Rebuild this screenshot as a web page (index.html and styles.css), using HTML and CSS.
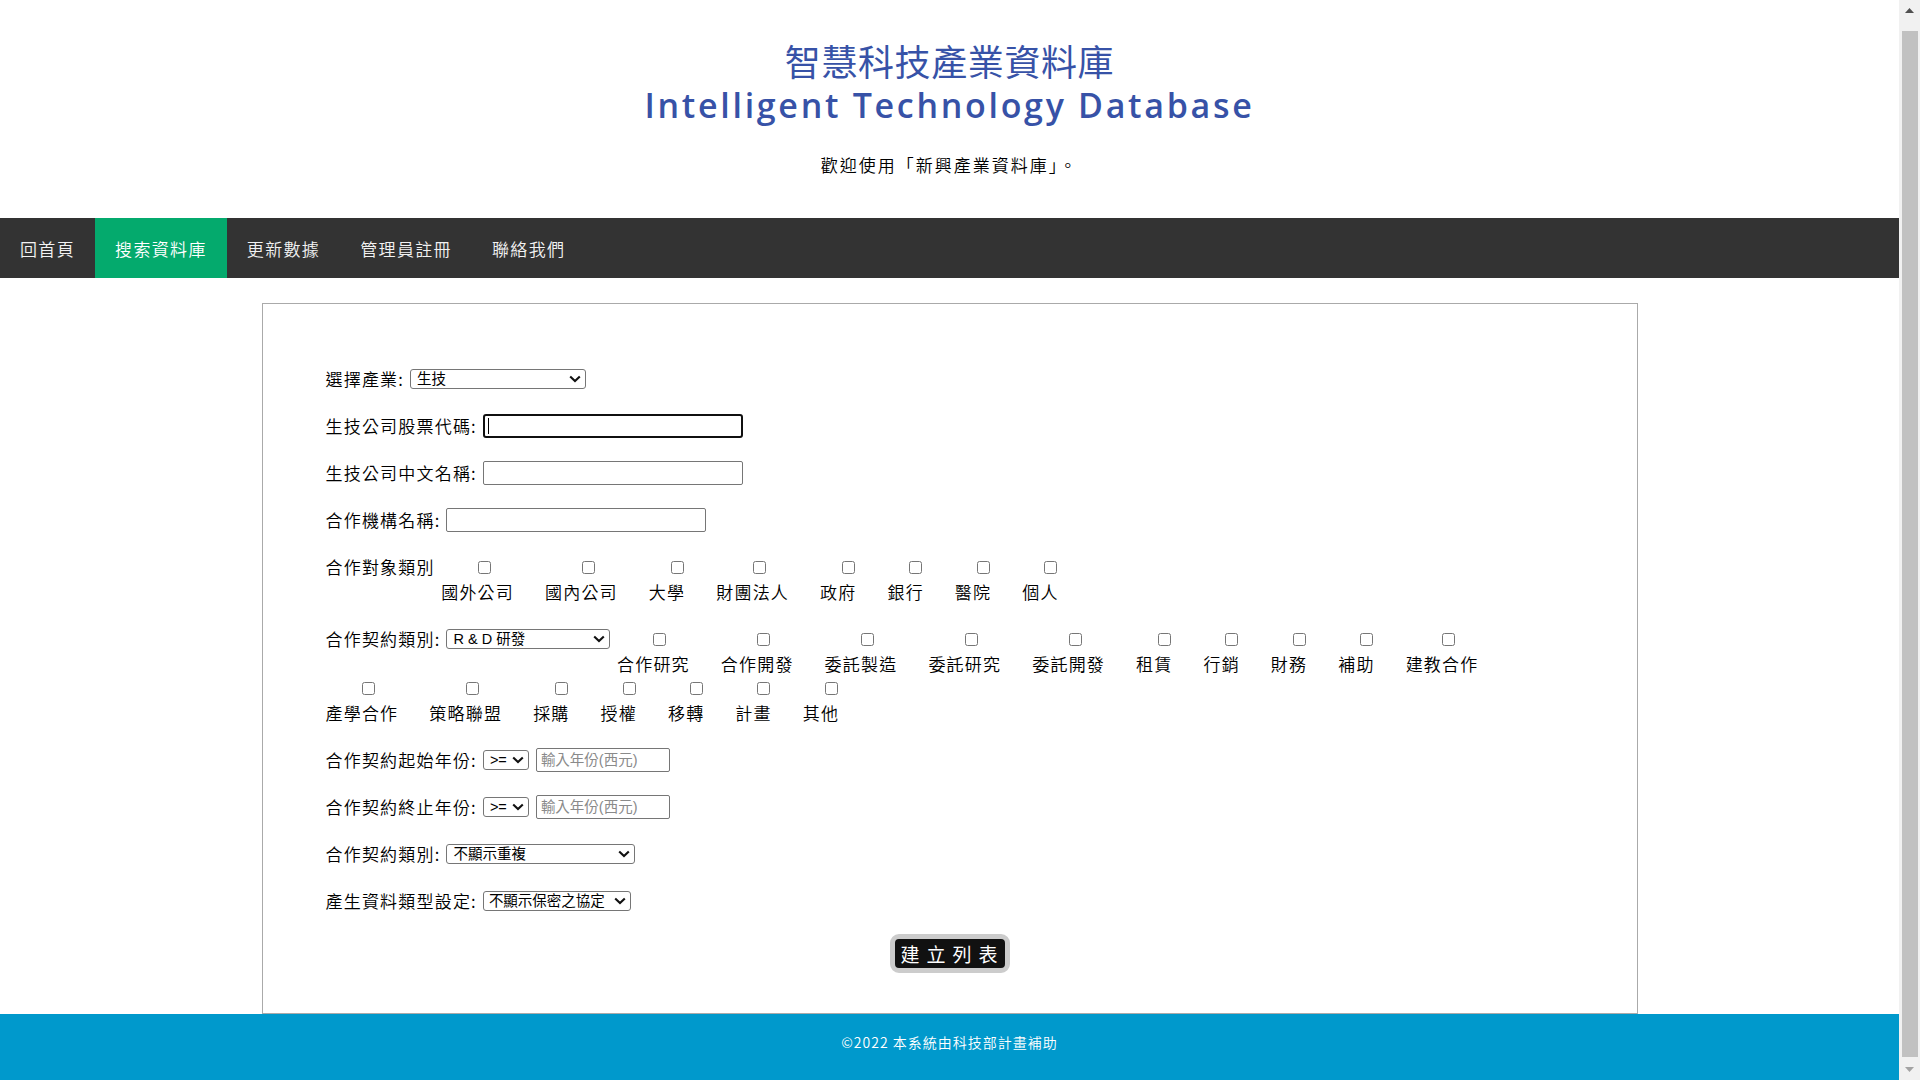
FILE: index.html
```html
<!DOCTYPE html>
<html lang="zh-Hant">
<head>
<meta charset="utf-8">
<title>智慧科技產業資料庫</title>
<link rel="stylesheet" href="styles.css">
</head>
<body>
<div class="viewport">
  <div class="main">
    <header class="header">
      <h1 class="title">
        <span class="title-zh">智慧科技產業資料庫</span>
        <span class="title-en">Intelligent Technology Database</span>
      </h1>
      <p class="welcome">歡迎使用「新興產業資料庫」。</p>
    </header>

    <nav class="topnav">
      <a href="#">回首頁</a>
      <a href="#" class="active">搜索資料庫</a>
      <a href="#">更新數據</a>
      <a href="#">管理員註冊</a>
      <a href="#">聯絡我們</a>
    </nav>

    <section class="panel">
      <form class="search-form">
        <div class="row">
          <label class="lbl">選擇產業:</label>
          <span class="sel-wrap">
            <select class="sel sel-industry"><option>生技</option></select>
            <svg class="chev" width="12" height="8" viewBox="0 0 12 8"><path d="M1.2 1.4 L6 6 L10.8 1.4" fill="none" stroke="#111" stroke-width="2.1"/></svg>
          </span>
        </div>
        <div class="row">
          <label class="lbl">生技公司股票代碼:</label>
          <span class="txt-wrap">
            <input type="text" class="txt is-focused">
            <span class="caret"></span>
          </span>
        </div>
        <div class="row">
          <label class="lbl">生技公司中文名稱:</label>
          <input type="text" class="txt">
        </div>
        <div class="row">
          <label class="lbl">合作機構名稱:</label>
          <input type="text" class="txt">
        </div>

        <div class="opts-block">
          <div class="opt-line">
            <span class="lbl">合作對象類別</span>
            <label class="opt w4"><span class="cb-line"><input type="checkbox" class="cb"></span><span class="opt-text">國外公司</span></label>
            <label class="opt w4"><span class="cb-line"><input type="checkbox" class="cb"></span><span class="opt-text">國內公司</span></label>
            <label class="opt w2"><span class="cb-line"><input type="checkbox" class="cb"></span><span class="opt-text">大學</span></label>
            <label class="opt w4"><span class="cb-line"><input type="checkbox" class="cb"></span><span class="opt-text">財團法人</span></label>
            <label class="opt w2"><span class="cb-line"><input type="checkbox" class="cb"></span><span class="opt-text">政府</span></label>
            <label class="opt w2"><span class="cb-line"><input type="checkbox" class="cb"></span><span class="opt-text">銀行</span></label>
            <label class="opt w2"><span class="cb-line"><input type="checkbox" class="cb"></span><span class="opt-text">醫院</span></label>
            <label class="opt w2"><span class="cb-line"><input type="checkbox" class="cb"></span><span class="opt-text">個人</span></label>
          </div>
        </div>

        <div class="opts-block">
          <div class="opt-line">
            <span class="lbl">合作契約類別:</span>
            <span class="sel-wrap in-line">
              <select class="sel sel-rd"><option>R &amp; D 研發</option></select>
              <svg class="chev" width="12" height="8" viewBox="0 0 12 8"><path d="M1.2 1.4 L6 6 L10.8 1.4" fill="none" stroke="#111" stroke-width="2.1"/></svg>
            </span>
            <label class="opt w4"><span class="cb-line"><input type="checkbox" class="cb"></span><span class="opt-text">合作研究</span></label>
            <label class="opt w4"><span class="cb-line"><input type="checkbox" class="cb"></span><span class="opt-text">合作開發</span></label>
            <label class="opt w4"><span class="cb-line"><input type="checkbox" class="cb"></span><span class="opt-text">委託製造</span></label>
            <label class="opt w4"><span class="cb-line"><input type="checkbox" class="cb"></span><span class="opt-text">委託研究</span></label>
            <label class="opt w4"><span class="cb-line"><input type="checkbox" class="cb"></span><span class="opt-text">委託開發</span></label>
            <label class="opt w2"><span class="cb-line"><input type="checkbox" class="cb"></span><span class="opt-text">租賃</span></label>
            <label class="opt w2"><span class="cb-line"><input type="checkbox" class="cb"></span><span class="opt-text">行銷</span></label>
            <label class="opt w2"><span class="cb-line"><input type="checkbox" class="cb"></span><span class="opt-text">財務</span></label>
            <label class="opt w2"><span class="cb-line"><input type="checkbox" class="cb"></span><span class="opt-text">補助</span></label>
            <label class="opt w4"><span class="cb-line"><input type="checkbox" class="cb"></span><span class="opt-text">建教合作</span></label>
          </div>
          <div class="opt-line">
            <label class="opt w4"><span class="cb-line"><input type="checkbox" class="cb"></span><span class="opt-text">產學合作</span></label>
            <label class="opt w4"><span class="cb-line"><input type="checkbox" class="cb"></span><span class="opt-text">策略聯盟</span></label>
            <label class="opt w2"><span class="cb-line"><input type="checkbox" class="cb"></span><span class="opt-text">採購</span></label>
            <label class="opt w2"><span class="cb-line"><input type="checkbox" class="cb"></span><span class="opt-text">授權</span></label>
            <label class="opt w2"><span class="cb-line"><input type="checkbox" class="cb"></span><span class="opt-text">移轉</span></label>
            <label class="opt w2"><span class="cb-line"><input type="checkbox" class="cb"></span><span class="opt-text">計畫</span></label>
            <label class="opt w2"><span class="cb-line"><input type="checkbox" class="cb"></span><span class="opt-text">其他</span></label>
          </div>
        </div>

        <div class="row">
          <label class="lbl">合作契約起始年份:</label>
          <span class="sel-wrap">
            <select class="sel sel-op"><option>&gt;=</option></select>
            <svg class="chev" width="12" height="8" viewBox="0 0 12 8"><path d="M1.2 1.4 L6 6 L10.8 1.4" fill="none" stroke="#111" stroke-width="2.1"/></svg>
          </span>
          <input type="text" class="year" placeholder="輸入年份(西元)">
        </div>
        <div class="row">
          <label class="lbl">合作契約終止年份:</label>
          <span class="sel-wrap">
            <select class="sel sel-op"><option>&gt;=</option></select>
            <svg class="chev" width="12" height="8" viewBox="0 0 12 8"><path d="M1.2 1.4 L6 6 L10.8 1.4" fill="none" stroke="#111" stroke-width="2.1"/></svg>
          </span>
          <input type="text" class="year" placeholder="輸入年份(西元)">
        </div>
        <div class="row">
          <label class="lbl">合作契約類別:</label>
          <span class="sel-wrap">
            <select class="sel sel-dup"><option>不顯示重複</option></select>
            <svg class="chev" width="12" height="8" viewBox="0 0 12 8"><path d="M1.2 1.4 L6 6 L10.8 1.4" fill="none" stroke="#111" stroke-width="2.1"/></svg>
          </span>
        </div>
        <div class="row">
          <label class="lbl">產生資料類型設定:</label>
          <span class="sel-wrap">
            <select class="sel sel-conf"><option>不顯示保密之協定</option></select>
            <svg class="chev" width="12" height="8" viewBox="0 0 12 8"><path d="M1.2 1.4 L6 6 L10.8 1.4" fill="none" stroke="#111" stroke-width="2.1"/></svg>
          </span>
        </div>

        <div class="submit-wrap">
          <button type="button" class="btn-build">建立列表</button>
        </div>
      </form>
    </section>

    <footer class="footer">©2022 本系統由科技部計畫補助</footer>
  </div>

  <div class="scrollbar">
    <span class="sb-btn">
      <svg width="9" height="5" viewBox="0 0 9 5"><polygon points="0,5 4.5,0 9,5" fill="#505050"/></svg>
    </span>
    <span class="sb-thumb"></span>
    <span class="sb-btn sb-down">
      <svg width="9" height="5" viewBox="0 0 9 5"><polygon points="0,0 9,0 4.5,5" fill="#a3a3a3"/></svg>
    </span>
  </div>
</div>
</body>
</html>
```

FILE: styles.css
```css
* {
  box-sizing: border-box;
}

html,
body {
  margin: 0;
  padding: 0;
  height: 100%;
  overflow: hidden;
  background: #ffffff;
}

body {
  font-family: "Noto Sans CJK TC", "Noto Sans", sans-serif;
  font-weight: 350;
  color: #000000;
}

.viewport {
  display: flex;
  height: 1080px;
  overflow: hidden;
}

.main {
  flex: 1;
  min-width: 0;
  overflow: hidden;
}

/* ---------- header ---------- */
.header {
  height: 218px;
  padding-top: 40px;
  text-align: center;
}

.title {
  margin: 0;
  font-weight: normal;
}

.title-zh {
  display: block;
  font-size: 36px;
  line-height: 40px;
  letter-spacing: 0.6px;
  color: #3752a7;
}

.title-en {
  display: block;
  margin-top: 5px;
  font-family: "Open Sans", "Noto Sans", sans-serif;
  font-weight: 600;
  font-size: 34px;
  line-height: 40px;
  letter-spacing: 2.7px;
  color: #3752a7;
}

.welcome {
  margin: 28px 0 0;
  font-size: 17px;
  line-height: 24px;
  letter-spacing: 2px;
}

/* ---------- nav ---------- */
.topnav {
  display: flex;
  height: 60px;
  background: #333333;
}

.topnav a {
  display: flex;
  align-items: center;
  padding: 0 20px;
  color: #f2f2f2;
  text-decoration: none;
  font-size: 17px;
  letter-spacing: 1.35px;
}

.topnav a.active {
  background: #04aa6d;
  color: #ffffff;
}

/* ---------- panel ---------- */
.panel {
  width: 1376px;
  margin: 25px auto 0;
  border: 1px solid #aaaaaa;
  padding: 63px 63px 40.5px;
}

.search-form {
  display: flex;
  flex-direction: column;
  gap: 23px;
}

.row {
  display: flex;
  align-items: center;
  gap: 6px;
  height: 24px;
}

.lbl {
  font-size: 17px;
  line-height: 24px;
  letter-spacing: 1.2px;
  white-space: nowrap;
}

/* select with drawn chevron */
.sel-wrap {
  position: relative;
  display: inline-flex;
  flex: none;
}

.sel-wrap.in-line {
  margin: 2px 0 0 6px;
}

.chev {
  position: absolute;
  right: 5px;
  top: 6px;
  pointer-events: none;
}

.sel {
  -webkit-appearance: none;
  appearance: none;
  height: 20px;
  border: 1px solid #767676;
  border-radius: 3px;
  background-color: #ffffff;
  color: #000000;
  font-family: "Liberation Sans", "Noto Sans CJK TC", sans-serif;
  font-weight: 400;
  font-size: 14.5px;
  line-height: 18px;
  padding: 0 0 0 6px;
  margin: 0;
}

.sel-industry { width: 176px; }
.sel-rd { width: 164px; }
.sel-op { width: 46px; }
.sel-dup { width: 189px; }
.sel-conf { width: 148px; padding-left: 5px; }

.txt,
.year {
  height: 24px;
  border: 1px solid #767676;
  border-radius: 2px;
  margin: 0;
  padding: 0 4px;
  font-family: "Liberation Sans", "Noto Sans CJK TC", sans-serif;
  font-size: 14.5px;
  background: #ffffff;
}

.txt { width: 260px; }
.year { width: 134px; margin-left: 1px; }

.year::placeholder {
  color: #8a8a8a;
}

.txt-wrap {
  position: relative;
  display: inline-flex;
  flex: none;
}

.txt.is-focused {
  border: 2px solid #101010;
  border-radius: 3px;
}

.caret {
  position: absolute;
  left: 5px;
  top: 4px;
  width: 1px;
  height: 16px;
  background: #000000;
}

/* ---------- checkbox option groups ---------- */
.opts-block {
  display: flex;
  flex-direction: column;
}

.opt-line {
  display: flex;
  align-items: flex-start;
}

.opt {
  display: flex;
  flex-direction: column;
  align-items: flex-start;
  margin-left: 6.5px;
  margin-right: 24.5px;
}

.opt-line > .opt:first-child {
  margin-left: 0;
}

.cb-line {
  display: flex;
  align-items: center;
  height: 24px;
}

.cb {
  width: 13px;
  height: 13px;
  margin: 0;
}

.opt.w4 .cb { margin-left: 36.5px; }
.opt.w2 .cb { margin-left: 22px; }

.opt-text {
  font-size: 17px;
  line-height: 25px;
  letter-spacing: 1.2px;
  white-space: nowrap;
}

/* ---------- button ---------- */
.submit-wrap {
  display: flex;
  justify-content: center;
  margin-top: -2.5px;
}

.btn-build {
  width: 120px;
  height: 39px;
  border: 5px solid #cccccc;
  border-radius: 9px;
  background: #111111;
  color: #ffffff;
  font-family: "Noto Sans CJK TC", "Noto Sans", sans-serif;
  font-weight: 400;
  font-size: 19px;
  letter-spacing: 7px;
  text-indent: 6px;
  white-space: nowrap;
  line-height: 27px;
  padding: 0;
}

/* ---------- footer ---------- */
.footer {
  height: 80px;
  padding-top: 18px;
  background: #0099cc;
  color: #ffffff;
  text-align: center;
  font-size: 14px;
  line-height: 20px;
  letter-spacing: 1px;
}

/* ---------- fake window scrollbar ---------- */
.scrollbar {
  width: 21px;
  flex: none;
  display: flex;
  flex-direction: column;
  align-items: center;
  background: #f1f1f1;
}

.sb-btn {
  height: 21px;
  width: 21px;
  display: flex;
  align-items: center;
  justify-content: center;
  flex: none;
}

.sb-thumb {
  flex: 1;
  width: 16px;
  margin: 10px 0 2px;
  background: #c1c1c1;
}
```
